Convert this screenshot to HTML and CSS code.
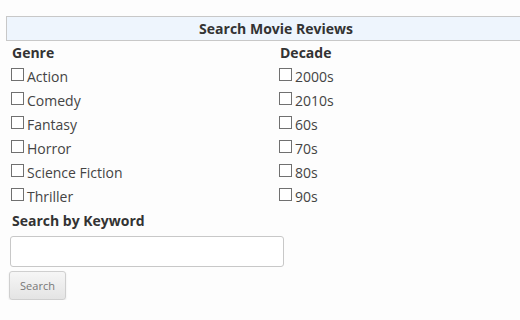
FILE: index.html
```html
<!DOCTYPE html>
<html lang="en">
<head>
  <meta charset="UTF-8">
  <title>Search Movie Reviews</title>
  <link rel="stylesheet" href="styles.css">
</head>
<body>
  <form class="panel">
    <div class="panel-title">Search Movie Reviews</div>
    <div class="columns">
      <div class="col">
        <h2>Genre</h2>
        <label class="option"><input type="checkbox">Action</label>
        <label class="option"><input type="checkbox">Comedy</label>
        <label class="option"><input type="checkbox">Fantasy</label>
        <label class="option"><input type="checkbox">Horror</label>
        <label class="option"><input type="checkbox">Science Fiction</label>
        <label class="option"><input type="checkbox">Thriller</label>
      </div>
      <div class="col">
        <h2>Decade</h2>
        <label class="option"><input type="checkbox">2000s</label>
        <label class="option"><input type="checkbox">2010s</label>
        <label class="option"><input type="checkbox">60s</label>
        <label class="option"><input type="checkbox">70s</label>
        <label class="option"><input type="checkbox">80s</label>
        <label class="option"><input type="checkbox">90s</label>
      </div>
    </div>
    <div class="keyword">
      <h2>Search by Keyword</h2>
      <input type="text" class="keyword-input">
      <button type="button" class="search-btn">Search</button>
    </div>
  </form>
</body>
</html>
```

FILE: styles.css
```css
body {
  margin: 0;
  background: #fdfdfd;
  font-family: "Open Sans", "DejaVu Sans", sans-serif;
  font-size: 14px;
  color: #444;
  overflow: hidden;
}
.panel {
  width: 540px;
  margin: 16px 0 0 6px;
}
.panel-title {
  border: 1px solid #c8c8c8;
  background: #eef5fd;
  text-align: center;
  font-weight: bold;
  line-height: 23px;
  color: #333;
}
h2 {
  font-size: 14px;
  font-weight: bold;
  color: #333;
  margin: 0;
  line-height: 24px;
}
.columns {
  display: grid;
  grid-template-columns: 268px 1fr;
  padding-left: 6px;
}
.option {
  display: flex;
  align-items: center;
  box-sizing: border-box;
  height: 24px;
  padding-bottom: 2px;
}
.option input {
  appearance: none;
  -webkit-appearance: none;
  width: 13px;
  height: 13px;
  margin: 0 3px 3px -1px;
  border: 1px solid #707070;
  background: #fff;
}
.keyword {
  padding-left: 6px;
}
.keyword-input {
  display: block;
  box-sizing: border-box;
  width: 274px;
  height: 31px;
  margin: 3px 0 0 -2px;
  border: 1px solid #c8c8c8;
  border-radius: 3px;
  background: #fff;
}
.search-btn {
  display: block;
  box-sizing: border-box;
  width: 57px;
  height: 29px;
  margin: 4px 0 0 -3px;
  padding: 0;
  border: 1px solid #cfcfcf;
  border-radius: 3px;
  background: linear-gradient(#f6f6f6, #e4e4e4);
  box-shadow: 0 1px 2px rgba(0, 0, 0, 0.1);
  font-family: "Open Sans", sans-serif;
  font-size: 11px;
  color: #777;
}
```
